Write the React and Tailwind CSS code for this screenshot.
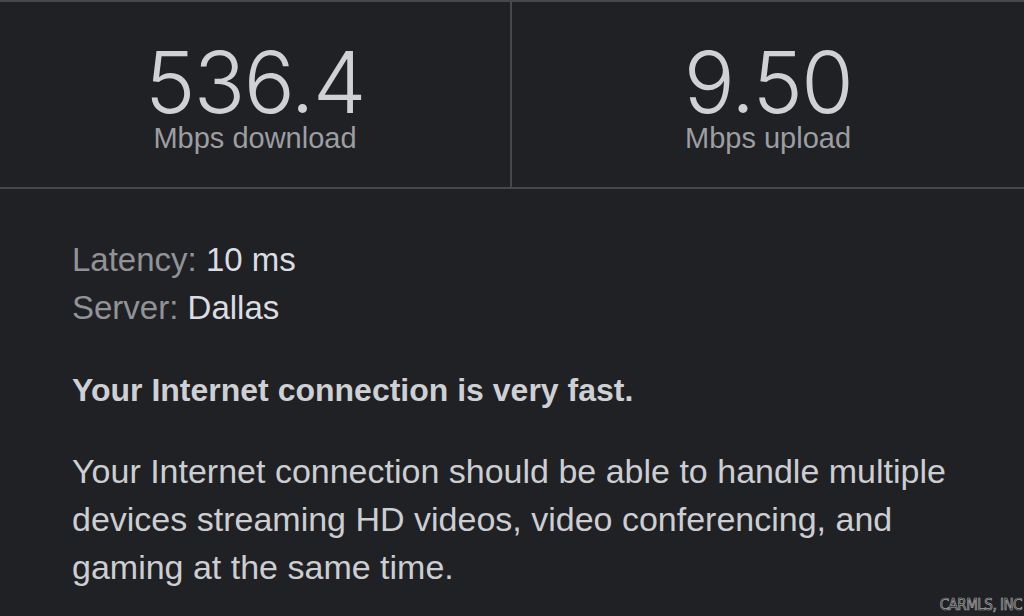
import React from "react";

const stats = [
  { value: "536.4", label: "Mbps download" },
  { value: "9.50", label: "Mbps upload" },
];

const App = () => {
  return (
    <div className="relative w-[1024px] h-[616px] overflow-hidden bg-[#202124] font-['Liberation_Sans',Arial,sans-serif]">
      <div className="grid grid-cols-2 h-[189px] border-t-2 border-b-2 border-[#46484c]">
        {stats.map((s, i) => (
          <div
            key={s.label}
            className={`flex flex-col items-center pt-[38px] ${i === 0 ? "border-r-2 border-[#46484c]" : ""}`}
          >
            <div className="text-[85px] leading-none text-[#d0d1d4] font-light font-['Inter','Liberation_Sans',sans-serif] tracking-[-1.5px]">{s.value}</div>
            <div className="text-[29px] leading-none mt-[-1px] text-[#9c9ea2]">{s.label}</div>
          </div>
        ))}
      </div>

      <div className="pl-[72px] pr-[40px] pt-[47px]">
        <div className="text-[33px] leading-[48px]">
          <div>
            <span className="text-[#919397]">Latency: </span>
            <span className="text-[#dcdde0]">10 ms</span>
          </div>
          <div>
            <span className="text-[#919397]">Server: </span>
            <span className="text-[#dcdde0]">Dallas</span>
          </div>
        </div>

        <p className="mt-[34px] text-[32px] leading-[48px] font-bold text-[#cfd0d3]">
          Your Internet connection is very fast.
        </p>

        <p className="mt-[33px] text-[34px] leading-[48px] text-[#cdced1]">
          Your Internet connection should be able to handle multiple devices streaming HD videos, video conferencing, and gaming at the same time.
        </p>
      </div>

      <div className="absolute right-[2px] bottom-[3px] text-[15px] leading-none tracking-[-0.5px] text-transparent [-webkit-text-stroke:0.7px_#a3a3a3] font-['DejaVu_Sans_Condensed','Liberation_Sans_Narrow',sans-serif]">
        CARMLS, INC
      </div>
    </div>
  );
};

export default App;
